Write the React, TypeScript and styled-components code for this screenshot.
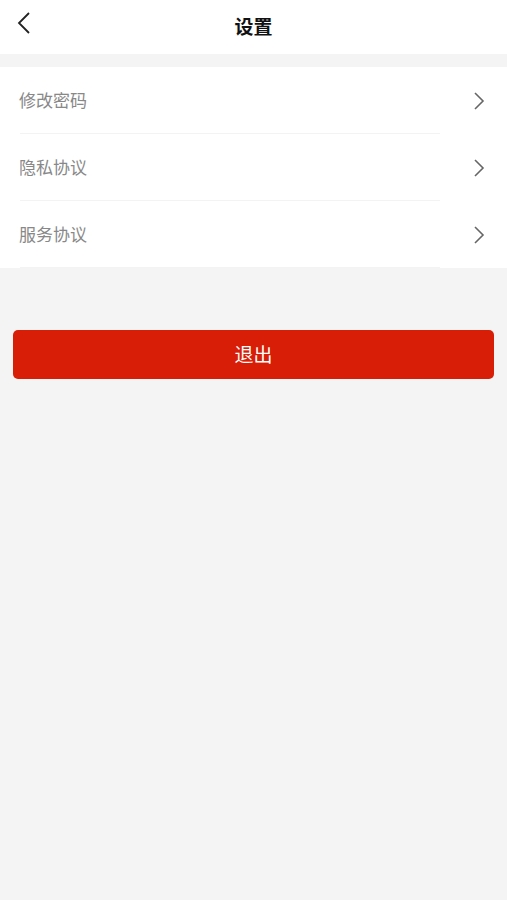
import styled, { createGlobalStyle } from "styled-components";

const GlobalStyle = createGlobalStyle`
  html, body {
    margin: 0;
    padding: 0;
    background: #f4f4f4;
    font-family: "Noto Sans CJK SC", "Liberation Sans", sans-serif;
  }
`;

const Page = styled.div`
  min-height: 900px;
  background: #f4f4f4;
`;

const Header = styled.header`
  height: 54px;
  background: #fff;
  display: grid;
  grid-template-columns: 54px 1fr 54px;
  align-items: center;
`;

const BackButton = styled.button`
  border: none;
  background: none;
  padding: 0 0 0 15px;
  height: 54px;
  display: flex;
  align-items: flex-start;
  padding-top: 11px;
  cursor: pointer;
`;

const Title = styled.h1`
  margin: 0 0 4px;
  line-height: 1;
  text-align: center;
  font-size: 19px;
  font-weight: 700;
  color: #111;
`;

const List = styled.ul`
  list-style: none;
  margin: 13px 0 0;
  padding: 0;
  background: #fff;
`;

const Row = styled.li`
  height: 67px;
  display: flex;
  align-items: center;
  justify-content: space-between;
  padding: 0 22px 0 19px;
  position: relative;
  &::after {
    content: "";
    position: absolute;
    left: 20px;
    width: 420px;
    bottom: 0;
    height: 1px;
    background: #f3f3f3;
  }
`;

const Label = styled.span`
  font-size: 17px;
  line-height: 1;
  margin-bottom: 2px;
  color: #888;
`;

const Logout = styled.button`
  display: block;
  margin: 62px 13px 0;
  width: calc(100% - 26px);
  height: 49px;
  padding: 0 0 3px;
  border: none;
  border-radius: 5px;
  background: #d81e06;
  color: #fff;
  font-family: inherit;
  font-size: 19px;
  line-height: 1;
  cursor: pointer;
`;

const BackIcon = () => (
  <svg width="16" height="24" viewBox="0 0 16 24" fill="none">
    <path d="M14 2 L4 12 L14 22" stroke="#222" strokeWidth="1.8" />
  </svg>
);

const Chevron = () => (
  <svg width="12" height="20" viewBox="0 0 12 20" fill="none">
    <path d="M2 2 L10 10 L2 18" stroke="#666" strokeWidth="1.6" />
  </svg>
);

const items = ["修改密码", "隐私协议", "服务协议"];

export default function App() {
  return (
    <Page>
      <GlobalStyle />
      <Header>
        <BackButton aria-label="返回">
          <BackIcon />
        </BackButton>
        <Title>设置</Title>
        <span />
      </Header>
      <List>
        {items.map((item) => (
          <Row key={item}>
            <Label>{item}</Label>
            <Chevron />
          </Row>
        ))}
      </List>
      <Logout>退出</Logout>
    </Page>
  );
}
